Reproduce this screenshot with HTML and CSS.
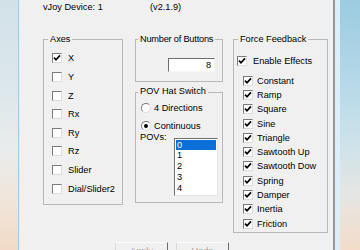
FILE: index.html
```html
<!DOCTYPE html>
<html>
<head>
<meta charset="utf-8">
<link rel="stylesheet" href="styles.css">
</head>
<body>
<div class="screen">
  <div class="desk desk-left"></div>
  <div class="window">
    <div class="dialog">
      <div class="header"><span class="dev">vJoy Device: 1</span><span class="ver">(v2.1.9)</span></div>
      <div class="columns">
        <div class="group axes">
          <div class="gtitle"><span class="gl"></span><span class="gt">Axes</span><span class="gr"></span></div>
          <div class="gbody">
            <div class="row"><span class="cb on"><svg viewBox="0 0 8 8"><polyline points="1,3.6 3,5.8 7,1.4"/></svg></span><span>X</span></div>
            <div class="row"><span class="cb"></span><span>Y</span></div>
            <div class="row"><span class="cb"></span><span>Z</span></div>
            <div class="row"><span class="cb"></span><span>Rx</span></div>
            <div class="row"><span class="cb"></span><span>Ry</span></div>
            <div class="row"><span class="cb"></span><span>Rz</span></div>
            <div class="row"><span class="cb"></span><span>Slider</span></div>
            <div class="row"><span class="cb"></span><span>Dial/Slider2</span></div>
          </div>
        </div>
        <div class="midcol">
          <div class="group nbtn">
            <div class="gtitle"><span class="gl"></span><span class="gt">Number of Buttons</span><span class="gr"></span></div>
            <div class="gbody">
              <div class="numbox">8</div>
            </div>
          </div>
          <div class="group pov">
            <div class="gtitle"><span class="gl"></span><span class="gt">POV Hat Switch</span><span class="gr"></span></div>
            <div class="gbody">
              <div class="radio-row"><span class="radio"></span><span>4 Directions</span></div>
              <div class="radio-row second"><span class="radio on"><span class="dot"></span></span><span>Continuous</span></div>
              <div class="povs">
                <span class="povs-label">POVs:</span>
                <div class="listbox">
                  <div class="item sel">0</div>
                  <div class="item">1</div>
                  <div class="item">2</div>
                  <div class="item">3</div>
                  <div class="item">4</div>
                </div>
              </div>
            </div>
          </div>
        </div>
        <div class="group ff">
          <div class="gtitle"><span class="gl"></span><span class="gt">Force Feedback</span><span class="gr"></span></div>
          <div class="gbody">
            <div class="frow enable"><span class="cb on"><svg viewBox="0 0 8 8"><polyline points="1,3.6 3,5.8 7,1.4"/></svg></span><span>Enable Effects</span></div>
            <div class="effects">
              <div class="frow"><span class="cb on"><svg viewBox="0 0 8 8"><polyline points="1,3.6 3,5.8 7,1.4"/></svg></span><span>Constant</span></div>
              <div class="frow"><span class="cb on"><svg viewBox="0 0 8 8"><polyline points="1,3.6 3,5.8 7,1.4"/></svg></span><span>Ramp</span></div>
              <div class="frow"><span class="cb on"><svg viewBox="0 0 8 8"><polyline points="1,3.6 3,5.8 7,1.4"/></svg></span><span>Square</span></div>
              <div class="frow"><span class="cb on"><svg viewBox="0 0 8 8"><polyline points="1,3.6 3,5.8 7,1.4"/></svg></span><span>Sine</span></div>
              <div class="frow"><span class="cb on"><svg viewBox="0 0 8 8"><polyline points="1,3.6 3,5.8 7,1.4"/></svg></span><span>Triangle</span></div>
              <div class="frow"><span class="cb on"><svg viewBox="0 0 8 8"><polyline points="1,3.6 3,5.8 7,1.4"/></svg></span><span>Sawtooth Up</span></div>
              <div class="frow"><span class="cb on"><svg viewBox="0 0 8 8"><polyline points="1,3.6 3,5.8 7,1.4"/></svg></span><span>Sawtooth Dow</span></div>
              <div class="frow"><span class="cb on"><svg viewBox="0 0 8 8"><polyline points="1,3.6 3,5.8 7,1.4"/></svg></span><span>Spring</span></div>
              <div class="frow"><span class="cb on"><svg viewBox="0 0 8 8"><polyline points="1,3.6 3,5.8 7,1.4"/></svg></span><span>Damper</span></div>
              <div class="frow"><span class="cb on"><svg viewBox="0 0 8 8"><polyline points="1,3.6 3,5.8 7,1.4"/></svg></span><span>Inertia</span></div>
              <div class="frow"><span class="cb on"><svg viewBox="0 0 8 8"><polyline points="1,3.6 3,5.8 7,1.4"/></svg></span><span>Friction</span></div>
            </div>
          </div>
        </div>
      </div>
      <div class="actions">
        <div class="btn">Apply</div>
        <div class="btn">Undo</div>
      </div>
    </div>
  </div>
  <div class="desk desk-right"></div>
</div>
</body>
</html>
```
FILE: styles.css
```css
* { box-sizing: border-box; }
html, body { margin: 0; padding: 0; }
body {
  width: 360px;
  height: 250px;
  overflow: hidden;
  font-family: "Liberation Sans", Arial, sans-serif;
  font-size: 9.2px;
  color: #000;
}
.screen { display: flex; height: 250px; overflow: hidden; }
.desk-left {
  width: 18px;
  flex: none;
  background: linear-gradient(180deg, #d2e1e8 0%, #dce7ec 35%, #e9ecec 60%, #f1e4d9 82%, #f2dac6 100%);
}
.desk-right {
  flex: 1;
  background: linear-gradient(180deg, #9ccbe0 0%, #b3d7e7 30%, #cbe1ea 55%, #e5e6e3 78%, #f3dcc9 100%);
}
.window {
  width: 322px;
  flex: none;
  display: flex;
  background: #dbeef9;
  border-left: 1px solid #9fcdec;
  padding-left: 1px;
  padding-right: 5px;
}
.dialog {
  width: 315px;
  height: 250px;
  background: #f0f0f0;
  border-right: 2px solid #969696;
  overflow: hidden;
}
.header {
  display: flex;
  padding: 2px 0 0 23px;
  height: 13px;
  line-height: 11px;
}
.dev { width: 107px; }
.columns {
  display: flex;
  align-items: flex-start;
  margin-top: 20.5px;
  padding-left: 23px;
}

/* group box */
.gtitle { display: flex; height: 11px; line-height: 11px; }
.gl, .gr {
  align-self: flex-end;
  height: 5.5px;
  border-top: 1px solid #b8b8b8;
}
.gl { flex: none; width: 5px; border-left: 1px solid #b8b8b8; }
.gr { flex: 1; min-width: 2px; border-right: 1px solid #b8b8b8; }
.gt { padding: 0 2px; white-space: nowrap; }
.gbody {
  border: 1px solid #b8b8b8;
  border-top: none;
}

.axes { width: 80px; flex: none; }
.axes .gbody { padding: 4.7px 0 6px 8px; }
.row { display: flex; align-items: center; height: 18.6px; }
.row .cb { margin-right: 6px; }
.cb {
  width: 10px;
  height: 10px;
  flex: none;
  background: #fff;
  border: 1px solid;
  border-color: #7b7b7b #dcdcdc #dcdcdc #7b7b7b;
  display: flex;
  align-items: center;
  justify-content: center;
}
.cb svg { width: 8px; height: 8px; }
.cb polyline { fill: none; stroke: #000; stroke-width: 1.7; }

.midcol { width: 88px; flex: none; margin-left: 12px; }
.nbtn .gl, .pov .gl { width: 3px; }
.nbtn .gt { letter-spacing: -0.2px; }
.nbtn .gbody { padding: 13px 0 9px 32px; }
.numbox {
  width: 47px;
  height: 14px;
  background: #fff;
  border: 1px solid;
  border-color: #6e6e6e #f8f8f8 #f8f8f8 #6e6e6e;
  text-align: right;
  padding-right: 3px;
  line-height: 12px;
}
.pov { margin-top: 4.5px; }
.pov .gbody { padding: 4.5px 0 6px 5px; }
.radio-row { display: flex; align-items: center; height: 12px; }
.radio-row.second { margin-top: 6px; }
.radio {
  width: 10px;
  height: 10px;
  flex: none;
  border-radius: 50%;
  background: #fff;
  border: 1px solid;
  border-color: #7b7b7b #dcdcdc #dcdcdc #7b7b7b;
  margin-right: 3px;
  display: flex;
  align-items: center;
  justify-content: center;
}
.dot { width: 4px; height: 4px; border-radius: 50%; background: #000; }
.povs { display: flex; align-items: flex-start; margin-left: -1px; }
.povs-label { width: 34px; line-height: 11px; }
.listbox {
  margin-top: 6px;
  width: 44px;
  height: 58px;
  background: #fff;
  border: 1px solid;
  border-color: #6e6e6e #e6e6e6 #e6e6e6 #6e6e6e;
  overflow: hidden;
}
.item { height: 11px; line-height: 11px; padding-left: 2px; }
.item.sel {
  background: #0a6fd6;
  color: #fff;
  margin: 1px 1px 0 1px;
  height: 10px;
  line-height: 10px;
  padding-left: 1px;
}

.ff { width: 95px; flex: none; margin-left: 10px; }
.ff .gbody { padding: 9px 0 1.7px 3px; }
.frow { display: flex; align-items: center; height: 14px; }
.frow .cb { margin-right: 4px; }
.frow.enable .cb { margin-right: 6px; }
.effects { margin-top: 6px; margin-left: 6px; }
.effects .frow { height: 14.3px; }

.actions {
  display: flex;
  gap: 8px;
  margin-top: 9px;
  padding-left: 95px;
}
.btn {
  width: 53px;
  height: 21px;
  border: 1px solid;
  border-color: #fbfbfb #6e6e6e #6e6e6e #dadada;
  color: #a3a3a3;
  text-align: center;
  line-height: 11px;
  padding-top: 3px;
}
```
